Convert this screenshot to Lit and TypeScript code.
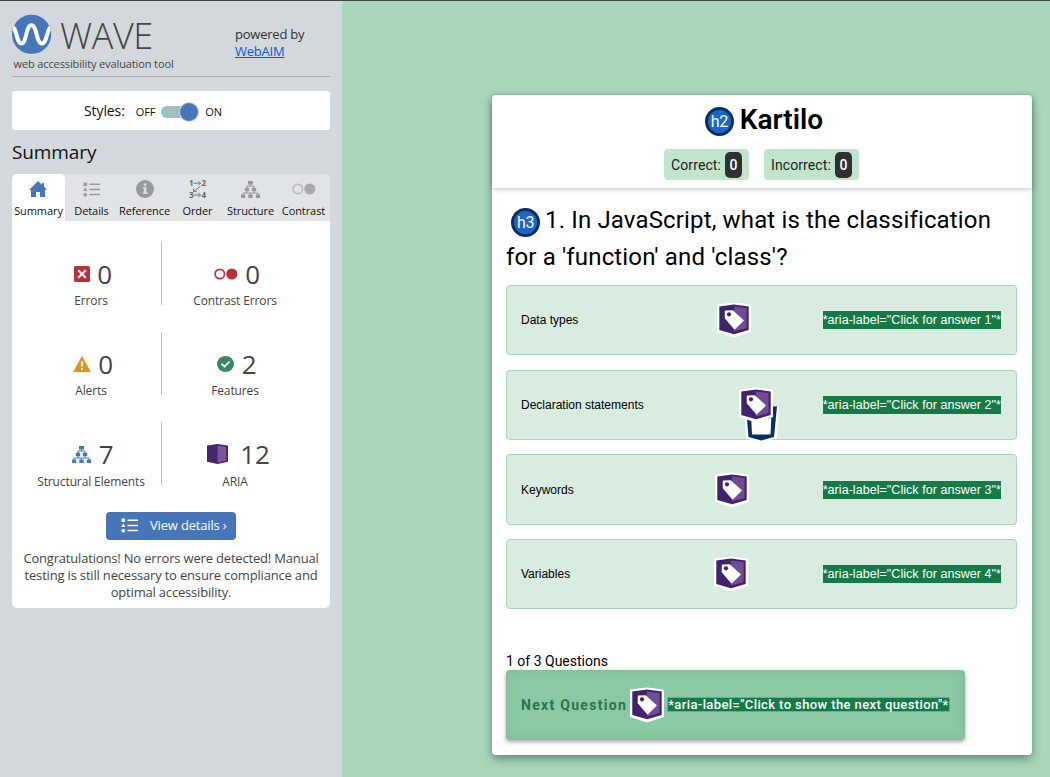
import { LitElement, html, css, svg } from "lit";
import { customElement } from "lit/decorators.js";

const homeIcon = html`<svg width="18" height="16" viewBox="0 0 18 16"><path fill="#4676b8" d="M9 0 13 3.7V2h2v3.6L18 9h-2v7h-5v-5H7v5H2V9H0z"/></svg>`;

const listIcon = (c: string) => html`<svg width="17" height="15" viewBox="0 0 17 15"><g fill=${c}><path d="M.5.5h3.600v3.600H.5zM2.300 5.400 4.400 9H.2z"/><circle cx="2.300" cy="12.700" r="1.900"/><path d="M6.500 1.600H17v1.500H6.500zM6.500 6.700H17v1.500H6.500zM6.500 11.800H17v1.500H6.500z"/></g></svg>`;

const infoIcon = html`<svg width="18" height="18" viewBox="0 0 18 18"><circle cx="9" cy="9" r="9" fill="#999"/><path fill="#e1e4e7" d="M7.800 3.600h2.600v2.200H7.800zM6.800 7.200h3.600v5.200h1.200v1.400H6.600v-1.400h1.200V8.600h-1z"/></svg>`;

const orderIcon = html`<svg width="24" height="26" viewBox="-3 -4 24 26"><g fill="#666" font-family="Open Sans" font-weight="700" font-size="8"><text x="0" y="6">1</text><text x="12.600" y="6">2</text><text x="0" y="18">3</text><text x="12.600" y="18">4</text></g><g fill="none" stroke="#777" stroke-width="1"><path d="M4.500 3.200h7M9.500 1.200l2 2-2 2M4.500 15h7M9.500 13l2 2-2 2M11.500 6 4.800 11.500M4.600 8.600v3h3"/></g></svg>`;

const treeIcon = (c: string) => html`<svg width="19" height="17" viewBox="0 0 19 17"><path fill=${c} d="M7 0h5v3.500H7zM3.800 6.800h4.400v3.400H3.800zM10.800 6.800h4.400v3.400h-4.400zM0 13.600h4.200V17H0zM7.300 13.600h4.400V17H7.300zM14.800 13.600H19V17h-4.200z"/><path fill="none" stroke=${c} d="M9.500 3v2M6 7V5h7v2M6 10v2M2 14v-2h7.500v2M13 10v2M9.500 12H17v2"/></svg>`;

const contrastIcon = (c: string, f: string) => html`<svg width="24" height="12" viewBox="0 0 24 12"><circle cx="5.800" cy="6" r="4.700" fill="none" stroke=${c} stroke-width="1.700"/><circle cx="17.800" cy="6" r="5.600" fill=${f}/></svg>`;

const errorIcon = html`<svg width="16" height="16" viewBox="0 0 16 16"><rect width="16" height="16" rx="1.500" fill="#b8313a"/><path d="m4.200 4.200 7.600 7.600m0-7.600-7.600 7.600" stroke="#fff" stroke-width="2"/></svg>`;

const alertIcon = html`<svg width="18" height="16" viewBox="0 0 18 16"><path fill="#e0941e" d="M9 0l9 16H0z"/><path fill="#fff" d="M8 5.300h2v5.200H8zM8 12h2v2H8z"/></svg>`;

const featureIcon = html`<svg width="17" height="16" viewBox="0 0 17 16"><ellipse cx="8.500" cy="8" rx="8.500" ry="8" fill="#3e8562"/><path d="m4.500 7.800 3 2.800 5-5" fill="none" stroke="#fff" stroke-width="1.800"/></svg>`;

const ariaIcon = html`<svg width="21" height="20" viewBox="0 0 21 20"><path fill="#48246d" d="M0 1.400 10.500 0 21 1.400v16.400L10.500 20 0 17.800z"/><path fill="#7a559d" d="m10.500 1.800 8.700 1v13.600l-8.700 2z"/></svg>`;

const tag = svg`<path fill="#fff" d="M1 2.500 18 .5l17 2v27.500L18 35.500 1 30z"/><path fill="#43226c" d="M3.300 4.400 18 2.500l14.700 1.900v23.700L18 32.200 3.300 28.100z"/><path fill="#6f4c95" d="m18 4.500 12.600 1.600v19.800L18 29.600z"/><path fill="#fff" stroke="#fff" stroke-width="1.500" stroke-linejoin="round" d="m9.500 9.300 7-.3L27 18.500 18.500 26.600 9.500 16z"/><circle cx="13" cy="12.300" r="2.100" fill="#43226c"/>`;

const tagIcon = html`<svg width="36" height="36" viewBox="0 0 36 36">${tag}</svg>`;

const listboxIcon = html`<svg width="36" height="56" viewBox="0 0 36 56"><path fill="#fff" d="M0 20h36l-2 31-15 5-16-4z"/><path fill="#062f63" d="M3 19.500h31l-3 30.500L18.500 53.500 5.500 50z"/><path fill="#fff" d="M8 27h20.500l-1 20.500H9z"/><path fill="#1269c6" d="M19 31.500 30.500 28.500l-.2 2L19 33z"/></svg>`;

const waveLogo = html`<svg width="40" height="40" viewBox="0 0 40 40"><defs><clipPath id="disc"><circle cx="19.600" cy="20.400" r="19.600"/></clipPath></defs><circle cx="19.600" cy="20.400" r="19.600" fill="#4676b8"/><path clip-path="url(#disc)" d="M-1 13C5 11 4 29.500 9.400 29.500S13.600 11.300 19.400 11.300 24.100 29.500 29.900 29.500 34.600 11 40.600 13" fill="none" stroke="#fff" stroke-width="4"/></svg>`;

const tabs = [
  { label: "Summary", icon: homeIcon },
  { label: "Details", icon: listIcon("#999") },
  { label: "Reference", icon: infoIcon },
  { label: "Order", icon: orderIcon },
  { label: "Structure", icon: treeIcon("#999") },
  { label: "Contrast", icon: contrastIcon("#bbb", "#aaa") },
];

const stats = [
  { n: 0, label: "Errors", icon: errorIcon },
  { n: 0, label: "Contrast Errors", icon: contrastIcon("#b8313a", "#b8313a") },
  { n: 0, label: "Alerts", icon: alertIcon },
  { n: 2, label: "Features", icon: featureIcon },
  { n: 7, label: "Structural Elements", icon: treeIcon("#4676b8") },
  { n: 12, label: "ARIA", icon: ariaIcon },
];

const options = [
  { text: "Data types", offset: 195 },
  { text: "Declaration statements", offset: 217 },
  { text: "Keywords", offset: 193 },
  { text: "Variables", offset: 192 },
];

@customElement("wave-sidebar")
class WaveSidebar extends LitElement {
  static styles = css`
    :host { display: block; width: 342px; box-sizing: border-box; padding: 0 12px; background: #d2d8dc; font-family: "Open Sans", sans-serif; color: #111; }
    svg { display: block; flex: none; }
    .head { display: flex; height: 75px; border-bottom: 1px solid #a9b0b4; box-sizing: content-box; }
    .brand { width: 223px; padding-top: 13px; }
    .mark { display: flex; height: 42px; gap: 8px; }
    .name { font-size: 36px; font-weight: 300; line-height: 43px; color: #444; letter-spacing: -0.4px; white-space: nowrap; }
    .tagline { font-size: 11px; line-height: 14px; margin: 1px 0 0 1.500px; color: #444; letter-spacing: -0.12px; white-space: nowrap; }
    .powered { padding-top: 25px; font-size: 13px; line-height: 17px; color: #333; letter-spacing: -0.22px; white-space: nowrap; }
    .powered a { color: #0b57d0; text-decoration: underline; }
    .styles { display: flex; align-items: center; height: 39px; width: 318px; box-sizing: border-box; padding-left: 72px; margin-top: 14px; background: #fff; border-radius: 3px; font-size: 14px; letter-spacing: -0.1px; }
    .styles .off { font-size: 11px; margin: 2px 0 0 11px; }
    .styles .on { font-size: 11px; margin: 2px 0 0 6px; }
    .switch { margin: 3px 0 0 6px; }
    h2 { font-size: 19px; line-height: 26px; font-weight: 400; margin: 9px 0 9px; letter-spacing: -0.1px; }
    .panel { width: 318px; height: 434px; background: #fff; border-radius: 5px; overflow: hidden; }
    .tabs { display: flex; height: 47px; background: #e1e4e7; }
    .tab { width: 53px; display: flex; flex-direction: column; align-items: center; font-size: 11px; line-height: 15px; letter-spacing: -0.08px; white-space: nowrap; }
    .tab.active { background: #fff; border-radius: 5px 5px 0 0; }
    .glyph { height: 29px; padding-top: 0; display: flex; align-items: center; }
    .tab:not(.active) .glyph { padding-top: 1px; height: 28px; }
    .tab.active .glyph { padding-right: 2px; }
    .stats { display: grid; grid-template-columns: 141px 146px; grid-auto-rows: 63px; row-gap: 27px; padding: 21px 0 0 9px; }
    .stat { display: flex; flex-direction: column; align-items: center; box-sizing: border-box; padding-top: 17px; color: #444; }
    .stat:nth-child(odd) { border-right: 1px solid #bfc2c4; }
    .count { display: flex; align-items: center; gap: 7.500px; height: 30px; padding-left: 4px; font-size: 26px; line-height: 30px; }
    .stat:last-child .count { gap: 12px; padding-left: 7px; }
    .label { font-size: 12px; line-height: 16px; margin-top: 4px; letter-spacing: -0.12px; white-space: nowrap; }
    .stat:nth-child(n + 5) .label { margin-top: 5px; }
    .button { display: flex; align-items: center; box-sizing: border-box; width: 130px; height: 28px; margin: 27px auto 0; padding: 0 0 1px 15px; gap: 12px; background: #4676b8; color: #fff; border-radius: 4px; font-size: 13px; letter-spacing: -0.18px; line-height: 17px; white-space: nowrap; }
    .message { margin: 10px 0 0; text-align: center; font-size: 13px; line-height: 17px; color: #444; letter-spacing: -0.18px; white-space: nowrap; }
  `;
  render() {
    return html`
      <div class="head">
        <div class="brand">
          <div class="mark">${waveLogo}<span class="name">WAVE</span></div>
          <div class="tagline">web accessibility evaluation tool</div>
        </div>
        <div class="powered">powered by<br /><a>WebAIM</a></div>
      </div>
      <div class="styles">Styles:<span class="off">OFF</span>
        <svg class="switch" width="38" height="22" viewBox="0 0 38 22"><rect x="0" y="5" width="34" height="12" rx="6" fill="#9cc0c6"/><circle cx="28" cy="11" r="10" fill="#cdd3d8"/><circle cx="28" cy="11" r="9" fill="#4676b8"/></svg>
        <span class="on">ON</span></div>
      <h2>Summary</h2>
      <div class="panel">
        <div class="tabs">${tabs.map((t, i) => html`<div class="tab ${i === 0 ? "active" : ""}"><div class="glyph">${t.icon}</div>${t.label}</div>`)}</div>
        <div class="stats">${stats.map((s) => html`<div class="stat"><div class="count">${s.icon}<span>${s.n}</span></div><div class="label">${s.label}</div></div>`)}</div>
        <div class="button">${listIcon("#fff")}<span>View details ›</span></div>
        <p class="message">Congratulations! No errors were detected! Manual<br />testing is still necessary to ensure compliance and<br />optimal accessibility.</p>
      </div>`;
  }
}

@customElement("quiz-card")
class QuizCard extends LitElement {
  static styles = css`
    :host { display: block; box-sizing: border-box; width: 540px; height: 660px; background: #fff; border-radius: 4px; box-shadow: 0 4px 10px rgba(20, 70, 50, 0.5); font-family: Roboto, sans-serif; color: #000; }
    svg { display: block; flex: none; }
    header { height: 93px; box-sizing: border-box; padding-top: 8px; box-shadow: 0 1px 5px rgba(0, 0, 0, 0.25); border-radius: 4px 4px 0 0; }
    h2 { display: flex; justify-content: center; gap: 6px; margin: 0; padding-left: 4px; height: 34px; line-height: 33px; font-size: 28px; font-weight: 600; }
    .circle { display: inline-flex; align-items: center; justify-content: center; box-sizing: border-box; width: 29px; height: 29px; border: 3px solid #062f63; border-radius: 50%; background: #1d65c9; color: #fff; font-size: 16px; line-height: 20px; font-weight: 400; letter-spacing: -0.3px; }
    h2 .circle { margin-top: 4px; }
    .scores { display: flex; justify-content: center; gap: 15px; margin: 12px 1px 0 0; }
    .score { display: flex; align-items: center; height: 31px; padding: 0 7px; background: #c0e5cc; border-radius: 4px; font-size: 14px; letter-spacing: 0.1px; color: #222; white-space: nowrap; }
    .score b { margin-left: 4px; width: 17px; height: 26px; line-height: 26px; text-align: center; border-radius: 5px; background: #303030; color: #fff; font-weight: 500; }
    .body { padding: 14px 15px 0 14px; }
    h3 { margin: 0; height: 83px; font-size: 24px; line-height: 37px; font-weight: 400; white-space: nowrap; letter-spacing: 0.15px; }
    .line { display: flex; align-items: center; height: 37px; }
    h3 .circle { margin: 4px 5px 0 5px; }
    .options { display: flex; flex-direction: column; gap: 14.400px; }
    .option { display: flex; align-items: center; box-sizing: border-box; height: 70.300px; padding: 0 15px 0 14px; background: #d9ece0; border: 1px solid #a9d3bc; border-radius: 4px; font: 12px "Liberation Sans", sans-serif; white-space: nowrap; }
    .icon { position: relative; display: block; width: 36px; height: 36px; flex: none; }
    .under { position: absolute; left: 5px; top: 0; }
    .over { position: relative; }
    .aria { background: #167a48; color: #fff; }
    .option .aria { margin-left: auto; font-size: 12.500px; letter-spacing: 0.050px; line-height: 18px; }
    .progress { margin-top: 43.600px; height: 17px; font-size: 14px; line-height: 17px; }
    .next { display: flex; align-items: center; box-sizing: border-box; width: 459px; height: 70px; padding-left: 15px; background: #8ac9a3; border-radius: 4px; box-shadow: 0 2px 4px rgba(0, 0, 0, 0.35), inset 0 0 8px rgba(70, 120, 90, 0.2); color: #2a734c; font-size: 14px; font-weight: 700; letter-spacing: 1.300px; white-space: nowrap; }
    .next .icon { margin: 0 2px; }
    .next .aria { font-size: 13px; letter-spacing: 0.400px; font-weight: 500; line-height: 13px; border: 1px solid #78a98a; }
  `;
  render() {
    return html`
      <header>
        <h2><span class="circle">h2</span>Kartilo</h2>
        <div class="scores">
          <div class="score">Correct:<b>0</b></div>
          <div class="score">Incorrect:<b>0</b></div>
        </div>
      </header>
      <div class="body">
        <h3><span class="line"><span class="circle">h3</span>1. In JavaScript, what is the classification</span><span class="line">for a 'function' and 'class'?</span></h3>
        <div class="options">
          ${options.map((o, i) => html`<div class="option"><span style="width:${o.offset}px">${o.text}</span><span class="icon">${i === 1 ? html`<span class="under">${listboxIcon}</span>` : ""}<span class="over">${tagIcon}</span></span><span class="aria">*aria-label="Click for answer ${i + 1}"*</span></div>`)}
        </div>
        <div class="progress">1 of 3 Questions</div>
        <div class="next"><span>Next Question</span><span class="icon">${tagIcon}</span><span class="aria">*aria-label="Click to show the next question"*</span></div>
      </div>`;
  }
}

@customElement("app-root")
class AppRoot extends LitElement {
  static styles = css`
    :host { display: flex; box-sizing: border-box; width: 1050px; height: 777px; overflow: hidden; border-top: 1px solid #404448; background: #a9d7bb; }
    .page { flex: 1; padding: 94px 0 0 150px; }
  `;
  render() {
    return html`<wave-sidebar></wave-sidebar><div class="page"><quiz-card></quiz-card></div>`;
  }
}
